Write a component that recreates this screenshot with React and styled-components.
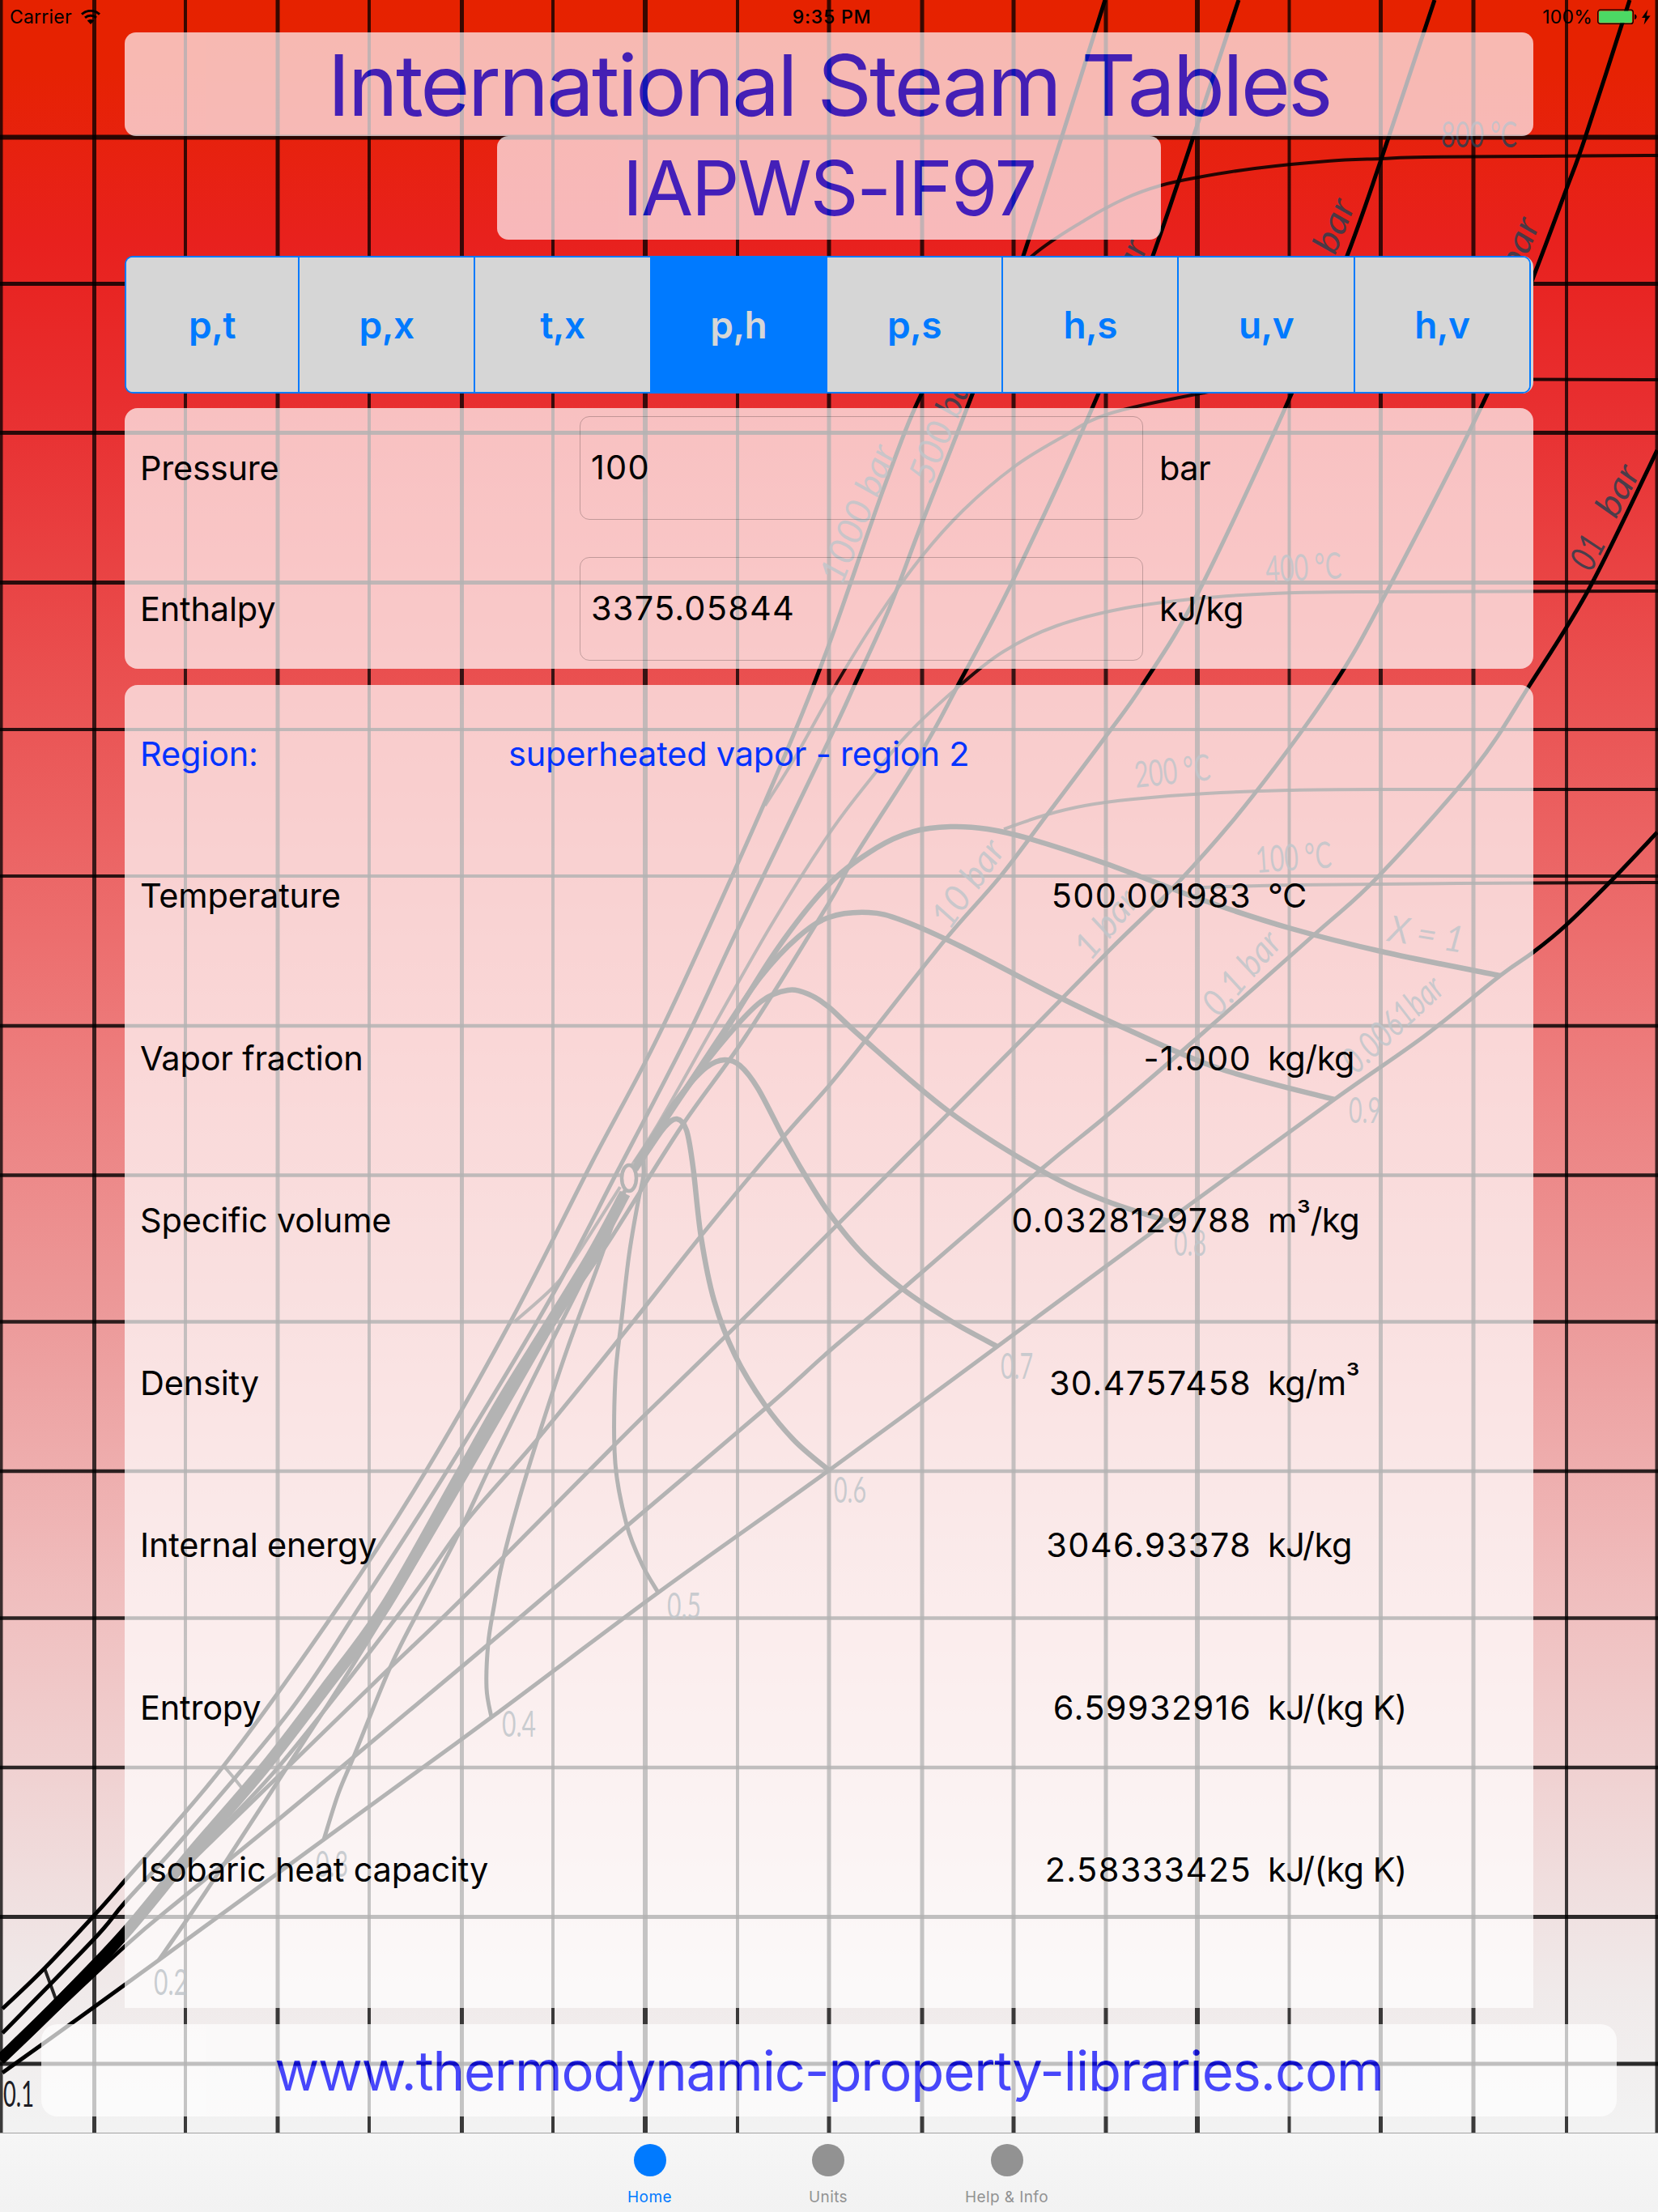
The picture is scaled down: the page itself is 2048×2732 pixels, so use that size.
import React, { useState } from 'react'
import styled, { createGlobalStyle } from 'styled-components'


const GlobalStyle = createGlobalStyle`
  * {
    box-sizing: border-box;
  }

  body {
    margin: 0;
    font-family: Inter, "Liberation Sans", sans-serif;
    color: #000;
  }
`;

const Cube = styled.span`
  font-size: 0.92em;
  line-height: 0;
  vertical-align: 8px;
`;


const modes = ["p,t", "p,x", "t,x", "p,h", "p,s", "h,s", "u,v", "h,v"];

const inputs = [
  { label: "Pressure", value: "100", unit: "bar" },
  { label: "Enthalpy", value: "3375.05844", unit: "kJ/kg" },
];

const results = [
  { label: "Temperature", value: "500.001983", unit: "°C" },
  { label: "Vapor fraction", value: "-1.000", unit: "kg/kg" },
  { label: "Specific volume", value: "0.0328129788", unit: <>m<Cube>³</Cube>/kg</> },
  { label: "Density", value: "30.4757458", unit: <>kg/m<Cube>³</Cube></> },
  { label: "Internal energy", value: "3046.93378", unit: "kJ/kg" },
  { label: "Entropy", value: "6.59932916", unit: "kJ/(kg K)" },
  { label: "Isobaric heat capacity", value: "2.58333425", unit: "kJ/(kg K)" },
];

const tabs = ["Home", "Units", "Help & Info"];


// grid of the h,s diagram: [position, line width]
const gridX = [
  [1, 5], [116.5, 5], [229, 4], [343, 5], [456, 4], [570.5, 5], [683, 4], [797, 6], [911, 4], [1024, 5],
  [1139, 5], [1252, 5], [1366, 5], [1479, 6], [1592.5, 4], [1705.5, 5], [1820, 5], [1935, 4], [2047, 5],
];

const gridY = [
  [169.5, 6], [350.5, 5], [534.5, 5], [719.5, 5], [901, 4], [1082, 4], [1267, 4.5],
  [1451.5, 4.5], [1632.5, 4.5], [1817, 4.5], [1998.5, 4.5], [2183, 4.5], [2367.5, 5], [2549, 5],
];

const isobars = [
  [[1190, 400], [1138, 487], [1092, 602], [1024, 796], [980, 908], [911, 1067], [813, 1280], [731, 1436], [633, 1628], [526, 1817], [421, 1980], [277, 2180], [154, 2323], [116, 2366], [55, 2431], [3, 2481]],
  [[1365, 0], [1264, 316], [1201, 487], [1138, 648], [1099, 750], [1056, 845], [1024, 914], [911, 1148], [849, 1280], [761, 1450], [681, 1602], [552, 1817], [447, 1980], [359, 2112], [229, 2267], [154, 2350], [116, 2395], [3, 2511]],
  [[1530, 0], [1424, 316], [1350, 502], [1252, 715], [1184, 845], [1138, 929], [1057, 1056], [1024, 1115], [921, 1280], [842, 1391], [751, 1535], [690, 1625], [640, 1708], [572, 1825]],
  [[1772, 0], [1706, 197], [1664, 316], [1595, 487], [1481, 730], [1412, 845], [1367, 908], [1298, 1000], [1236, 1082], [1168, 1160], [1073, 1280], [1023, 1342], [967, 1405], [867, 1525], [784, 1630], [666, 1775], [575, 1880], [503, 1980], [346, 2180], [229, 2302]],
  [[2013, 0], [1958, 170], [1935, 233], [1896, 337], [1837, 487], [1716, 725], [1648, 845], [1546, 985], [1458, 1087], [1370, 1174], [1266, 1280], [1138, 1409], [1024, 1523], [914, 1633], [797, 1747], [728, 1816], [565, 1980], [470, 2071], [359, 2179], [229, 2306], [154, 2384], [40, 2500]],
  [[2047, 556], [1964, 725], [1889, 847], [1821, 949], [1703, 1082], [1625, 1153], [1481, 1280], [1367, 1378], [1285, 1445], [1115, 1592], [1024, 1669], [946, 1739], [774, 1885], [663, 1980], [571, 2058], [444, 2164], [343, 2248], [229, 2341], [154, 2404], [20, 2530]],
  [[2047, 1028], [1991, 1087], [1934, 1143], [1894, 1176], [1853, 1205], [1759, 1280], [1648, 1358], [1442, 1508], [1232, 1663], [1024, 1816], [813, 1967], [607, 2121], [400, 2272], [196, 2421], [98, 2492], [3, 2560]],
];

const isotherms = [
  [[2048, 192], [1900, 193], [1760, 194], [1706, 196], [1640, 199], [1550, 208], [1480, 219], [1434, 229], [1390, 245], [1340, 272], [1275, 316], [1200, 390]],
  [[2048, 469], [1700, 469], [1560, 475], [1488, 485], [1370, 511], [1310, 541], [1252, 577], [1190, 630], [1138, 688], [1083, 764], [1034, 843], [983, 934], [945, 995]],
  [[2048, 730], [1677, 731], [1573, 733], [1481, 739], [1390, 751], [1305, 773], [1239, 805], [1184, 848], [1122, 906], [1073, 965], [1024, 1030], [953, 1142], [880, 1270], [812, 1390], [780, 1440]],
  [[2048, 975], [1700, 975], [1592, 976], [1490, 980], [1400, 987], [1340, 995], [1290, 1007], [1240, 1024]],
  [[2048, 1090], [1800, 1091], [1600, 1093], [1480, 1096]],
  [[766, 1466], [706, 1560], [681, 1592], [636, 1632]],
  [[278, 2183], [289, 2196], [300, 2210]],
  [[55, 2431], [62, 2450], [70, 2472]],
];

const qualities = [
  [[1853, 1205], [1710, 1176], [1592, 1146], [1481, 1110], [1367, 1067], [1272, 1036], [1220, 1024], [1174, 1021], [1128, 1027], [1083, 1047], [1024, 1092], [960, 1172], [895, 1275], [850, 1340], [785, 1436]],
  [[1648, 1358], [1507, 1320], [1396, 1273], [1305, 1230], [1187, 1169], [1115, 1137], [1073, 1127], [1024, 1133], [985, 1158], [940, 1206], [895, 1272], [850, 1340], [785, 1436]],
  [[1442, 1508], [1363, 1482], [1285, 1445], [1171, 1372], [1063, 1280], [1024, 1244], [999, 1228], [973, 1223], [940, 1237], [900, 1278], [850, 1342], [785, 1440]],
  [[1232, 1663], [1177, 1633], [1115, 1592], [1065, 1548], [1024, 1498], [993, 1449], [967, 1403], [936, 1344], [914, 1316], [895, 1309], [873, 1318], [845, 1347], [820, 1382], [785, 1442]],
  [[1024, 1816], [982, 1780], [944, 1734], [908, 1674], [882, 1606], [866, 1528], [856, 1441], [848, 1396], [836, 1382], [821, 1392], [800, 1422], [785, 1445]],
];

const thinQualities = [
  [[813, 1967], [793, 1932], [774, 1883], [760, 1807], [760, 1704], [768, 1628], [777, 1550], [788, 1485], [795, 1450], [793, 1425]],
  [[607, 2121], [601, 2085], [603, 2030], [610, 1985], [620, 1932], [640, 1856], [666, 1771], [700, 1668], [738, 1565], [752, 1525], [772, 1470]],
  [[400, 2272], [418, 2215], [438, 2167], [483, 2057], [522, 1980], [568, 1891], [614, 1793], [680, 1660], [735, 1550], [770, 1472]],
  [[196, 2421], [235, 2365], [281, 2296], [346, 2196], [418, 2085], [483, 1980], [560, 1850], [675, 1650]],
];

const liquidLine = [[772, 1474], [731, 1550], [679, 1635], [620, 1730], [568, 1822], [477, 1982], [402, 2085], [326, 2184], [235, 2290], [154, 2388], [72, 2474], [0, 2544]];

const notes = [
  { text: "800 °C", x: 1780, y: 182, length: 94 },
  { text: "400 °C", x: 1564, y: 719, length: 94, angle: -3 },
  { text: "200 °C", x: 1403, y: 973, length: 94, angle: -6 },
  { text: "100 °C", x: 1552, y: 1078, length: 94, angle: -4 },
  { text: "X = 1", x: 1713, y: 1162, length: 94, angle: 9, slant: true },
  { text: "1000 bar", x: 1040, y: 724, length: 180, angle: -68, slant: true },
  { text: "500 bar", x: 1150, y: 600, length: 150, angle: -68, slant: true },
  { text: "200 bar", x: 1362, y: 443, length: 150, angle: -68, slant: true },
  { text: "bar", x: 1649, y: 316, length: 68, angle: -68, slant: true },
  { text: "50 bar", x: 1851, y: 404, length: 138, angle: -68, slant: true },
  { text: "01", x: 1965, y: 708, length: 42, angle: -62, slant: true },
  { text: "bar", x: 1996, y: 642, length: 66, angle: -62, slant: true },
  { text: "10 bar", x: 1173, y: 1150, length: 122, angle: -55, slant: true },
  { text: "1 bar", x: 1347, y: 1188, length: 96, angle: -50, slant: true },
  { text: "0.1 bar", x: 1505, y: 1258, length: 122, angle: -49, slant: true },
  { text: "0.0061bar", x: 1675, y: 1328, length: 152, angle: -43, slant: true },
  { text: "0.9", x: 1666, y: 1387, length: 40 },
  { text: "0.8", x: 1450, y: 1551, length: 40 },
  { text: "0.7", x: 1236, y: 1703, length: 40 },
  { text: "0.6", x: 1030, y: 1856, length: 40 },
  { text: "0.5", x: 824, y: 1999, length: 42 },
  { text: "0.4", x: 620, y: 2145, length: 42 },
  { text: "0.3", x: 390, y: 2318, length: 40 },
  { text: "0.2", x: 190, y: 2464, length: 42 },
  { text: "0.1", x: 4, y: 2602, length: 38, dark: true },
];

// smooth line through all the points
const smooth = (pts) => {
  let d = `M${pts[0][0]} ${pts[0][1]}`;
  for (let i = 0; i < pts.length - 1; i++) {
    const a = pts[i - 1] || pts[i];
    const b = pts[i];
    const c = pts[i + 1];
    const e = pts[i + 2] || c;
    d += `C${b[0] + (c[0] - a[0]) / 6} ${b[1] + (c[1] - a[1]) / 6} ${c[0] - (e[0] - b[0]) / 6} ${c[1] - (e[1] - b[1]) / 6} ${c[0]} ${c[1]}`;
  }
  return d;
};


const Screen = styled.div`
  width: 2048px;
  height: 2732px;
  display: grid;
  grid-template: 1fr / 1fr;
  overflow: hidden;
`;

const Diagram = styled.svg`
  grid-area: 1 / 1;
  width: 2048px;
  height: 2732px;
  display: block;
`;

const Note = styled.text`
  font-family: Lato, sans-serif;
  font-size: 45px;
  font-style: ${(props) => (props.$slant ? "italic" : "normal")};
  fill: ${(props) => (props.$dark ? "#1c1c24" : "rgba(45, 62, 78, 0.85)")};
`;

const Page = styled.div`
  grid-area: 1 / 1;
  position: relative;
  display: flex;
  flex-direction: column;
  align-items: center;
`;

const StatusBar = styled.div`
  width: 100%;
  height: 40px;
  padding: 2px 8px 0 12px;
  display: grid;
  grid-template-columns: 1fr auto 1fr;
  align-items: center;
  font-size: 23px;
  letter-spacing: 0.2px;
`;

const StatusLeft = styled.div`
  display: flex;
  align-items: center;
  gap: 11px;
`;

const Clock = styled.div`
  font-weight: 500;
  font-size: 23px;
  letter-spacing: 0.8px;
  padding-left: 3px;
`;

const StatusRight = styled.div`
  display: flex;
  align-items: center;
  justify-content: flex-end;
  gap: 6px;
`;

const Title = styled.h1`
  width: ${(props) => props.$width}px;
  height: 128px;
  margin: 0;
  display: flex;
  align-items: center;
  justify-content: center;
  border-radius: 14px;
  background: #fffafe;
  opacity: 0.7;
  color: #001fff;
  font-weight: 400;
  font-size: ${(props) => props.$size}px;
  letter-spacing: ${(props) => props.$track}px;
  white-space: nowrap;
`;

const Segments = styled.div`
  width: 1740px;
  height: 170px;
  margin-top: 20px;
  padding-right: 3px;
  border-radius: 14px;
  background: #d6d6d6;
`;

const SegmentFrame = styled.div`
  height: 100%;
  display: flex;
  border: 2px solid #007aff;
  border-radius: 10px;
  overflow: hidden;
`;

const Segment = styled.button`
  flex: ${(props) => (props.$first ? "0 0 212px" : "1")};
  padding: 0;
  border: 0;
  border-left: ${(props) => (props.$first ? "0" : "2px solid #007aff")};
  background: ${(props) => (props.$active ? "#007aff" : "#d6d6d6")};
  color: ${(props) => (props.$active ? "#d6d6d6" : "#007aff")};
  font-family: inherit;
  font-weight: 560;
  font-size: 46px;
  letter-spacing: -0.5px;
`;

const Panel = styled.section`
  width: 1740px;
  padding-left: 19px;
  border-radius: ${(props) => props.$radius};
  background: rgba(255, 255, 255, 0.7);
  font-size: 41.5px;
`;

const InputPanel = styled(Panel)`
  height: 322px;
  margin-top: 18px;
  padding-top: 10px;
  display: flex;
  flex-direction: column;
  gap: 46px;
`;

const InputRow = styled.div`
  height: 128px;
  display: grid;
  grid-template-columns: 543px 696px 1fr;
  align-items: center;
`;

const Field = styled.input`
  height: 128px;
  padding: 0 13px 2px;
  border: 1px solid rgba(0, 0, 0, 0.22);
  border-radius: 12px;
  background: transparent;
  font: inherit;
  color: inherit;
  letter-spacing: 1.2px;
  outline: none;
`;

const Label = styled.div`
  letter-spacing: -0.2px;
  white-space: nowrap;
`;

const Unit = styled.div`
  padding-left: 20px;
  letter-spacing: -0.5px;
`;

const ResultPanel = styled(Panel)`
  height: 1634px;
  margin-top: 20px;
`;

const RegionRow = styled.div`
  height: 160px;
  padding-top: 9px;
  display: grid;
  grid-template-columns: 455px 1fr;
  align-items: center;
  color: #0433ff;
`;

const ResultRow = styled.div`
  height: 200.5px;
  display: grid;
  grid-template-columns: 455px 918px 1fr;
  align-items: center;
`;

const Value = styled.div`
  text-align: right;
  letter-spacing: 1.35px;
`;

const Link = styled.a`
  width: 1946px;
  height: 114px;
  margin-top: 20px;
  display: flex;
  align-items: center;
  justify-content: center;
  border-radius: 20px;
  background: #fff;
  opacity: 0.7;
  color: #0000ff;
  font-size: 67px;
  letter-spacing: -1.15px;
  text-decoration: none;
`;

const TabBar = styled.nav`
  width: 100%;
  height: 98px;
  margin-top: 20px;
  padding: 13px 2px 0 0;
  display: flex;
  justify-content: center;
  border-top: 1px solid #a3a3a3;
  background: linear-gradient(#f6f6f6, #f2f2f2);
`;

const Tab = styled.div`
  width: 220.5px;
  display: flex;
  flex-direction: column;
  align-items: center;
  gap: 13px;
  color: ${(props) => (props.$active ? "#007aff" : "#929292")};
  font-size: 19px;
  line-height: 26px;
  letter-spacing: 0.4px;
`;

const Dot = styled.span`
  width: 40px;
  height: 40px;
  border-radius: 50%;
  background: currentColor;
`;


const WifiIcon = () => (
  <svg width="24" height="18" viewBox="0 0 24 18" fill="none" stroke="#000" strokeWidth="2.9">
    <path d="M1 5.6C7.2-0.2 16.8-0.2 23 5.6" />
    <path d="M5 9.9C9 6.3 15 6.3 19 9.9" />
    <path d="M12 18L7.8 13.5C10.2 11.5 13.8 11.5 16.2 13.5Z" fill="#000" stroke="none" />
  </svg>
);

const BatteryIcon = () => (
  <svg width="67" height="20" viewBox="0 0 67 20">
    <rect x="0.7" y="1.2" width="43.6" height="17.2" rx="3" fill="none" stroke="#000" strokeWidth="1.2" />
    <rect x="2" y="2.4" width="41" height="14.8" rx="1.6" fill="#4cd964" />
    <path d="M46 6.6C49.6 7.4 49.6 12.4 46 13.2Z" fill="#000" />
    <path d="M62.5 0.5L55 11H59.4L57.6 19.5L65.6 8.6H60.8Z" fill="#000" />
  </svg>
);

const SteamDiagram = () => (
  <Diagram viewBox="0 0 2048 2732">
    <defs>
      <linearGradient id="heat" x1="0" y1="0" x2="0" y2="2732" gradientUnits="userSpaceOnUse">
        <stop offset="0" stopColor="#e62200" />
        <stop offset="0.03" stopColor="#e62202" />
        <stop offset="0.11" stopColor="#e8211e" />
        <stop offset="0.18" stopColor="#e82e2f" />
        <stop offset="0.33" stopColor="#ea5656" />
        <stop offset="0.47" stopColor="#ed7a7a" />
        <stop offset="0.585" stopColor="#ec9797" />
        <stop offset="0.725" stopColor="#f0bfbf" />
        <stop offset="0.8" stopColor="#f0d1d1" />
        <stop offset="0.9" stopColor="#f0eaea" />
        <stop offset="0.96" stopColor="#f2f2f2" />
        <stop offset="1" stopColor="#f3f3f3" />
      </linearGradient>
    </defs>
    <rect width="2048" height="2732" fill="url(#heat)" />
    <g stroke="#000">
      {gridX.map(([x, w]) => (
        <line key={x} x1={x} x2={x} y1="0" y2="2636" strokeWidth={w} strokeOpacity="0.76" />
      ))}
      {gridY.map(([y, w]) => (
        <line key={y} x1="0" x2="2048" y1={y} y2={y} strokeWidth={w} strokeOpacity="0.82" />
      ))}
    </g>
    <g fill="none" stroke="#000" strokeWidth="5">
      {isobars.map((pts, i) => <path key={i} d={smooth(pts)} />)}
      {isotherms.map((pts, i) => <path key={i} d={smooth(pts)} strokeWidth="4" strokeOpacity="0.85" />)}
      {thinQualities.map((pts, i) => <path key={i} d={smooth(pts)} />)}
      {qualities.map((pts, i) => <path key={i} d={smooth(pts)} strokeWidth="6.5" />)}
      <path d={smooth(liquidLine)} strokeWidth="14" />
    </g>
    <ellipse cx="777" cy="1455" rx="9" ry="16" fill="#ec8888" stroke="#000" strokeWidth="4.5" />
    {notes.map((note) => (
      <Note
        key={note.text + note.x}
        $slant={note.slant}
        $dark={note.dark}
        textLength={note.length}
        lengthAdjust="spacingAndGlyphs"
        transform={`translate(${note.x} ${note.y}) rotate(${note.angle || 0})`}
      >
        {note.text}
      </Note>
    ))}
  </Diagram>
);

const App = () => {
  const [mode, setMode] = useState("p,h")
  return (
    <Screen>
      <GlobalStyle />
      <SteamDiagram />
      <Page>
        <StatusBar>
          <StatusLeft>Carrier <WifiIcon /></StatusLeft>
          <Clock>9:35 PM</Clock>
          <StatusRight>100% <BatteryIcon /></StatusRight>
        </StatusBar>
        <Title $width={1740} $size={105} $track={-2.9}>International Steam Tables</Title>
        <Title as="h2" $width={820} $size={93} $track={-2.1}>IAPWS-IF97</Title>
        <Segments>
          <SegmentFrame>
            {modes.map((item, i) => (
              <Segment key={item} $first={i === 0} $active={mode === item} onClick={() => setMode(item)}>{item}</Segment>
            ))}
          </SegmentFrame>
        </Segments>
        <InputPanel $radius="16px">
          {inputs.map((row) => (
            <InputRow key={row.label}>
              <Label>{row.label}</Label>
              <Field defaultValue={row.value} />
              <Unit>{row.unit}</Unit>
            </InputRow>
          ))}
        </InputPanel>
        <ResultPanel $radius="16px 16px 0 0">
          <RegionRow>
            <Label>Region:</Label>
            <Label>superheated vapor - region 2</Label>
          </RegionRow>
          {results.map((row) => (
            <ResultRow key={row.label}>
              <Label>{row.label}</Label>
              <Value>{row.value}</Value>
              <Unit>{row.unit}</Unit>
            </ResultRow>
          ))}
        </ResultPanel>
        <Link>www.thermodynamic-property-libraries.com</Link>
        <TabBar>
          {tabs.map((tab, i) => (
            <Tab key={tab} $active={i === 0}>
              <Dot />
              {tab}
            </Tab>
          ))}
        </TabBar>
      </Page>
    </Screen>
  )
};

export default App
